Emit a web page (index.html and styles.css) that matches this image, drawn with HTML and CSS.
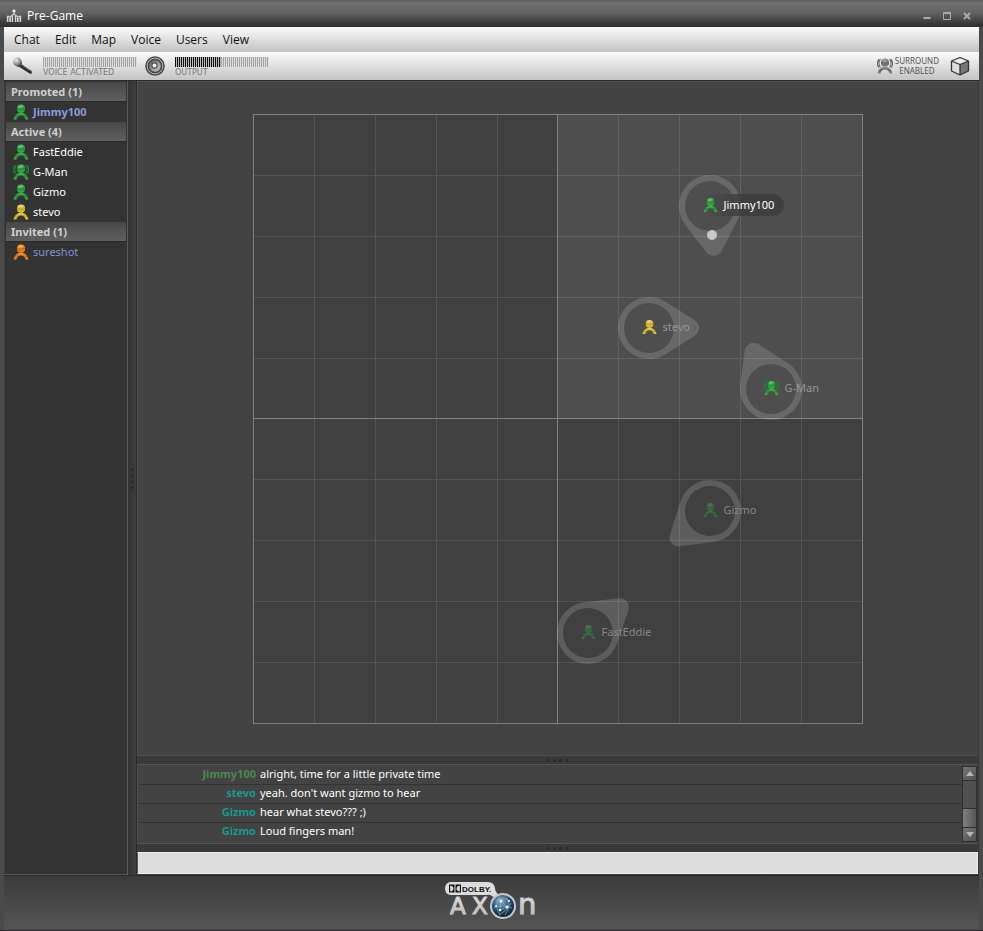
FILE: index.html
```html
<!DOCTYPE html>
<html lang="en">
<head>
<meta charset="utf-8">
<title>Pre-Game</title>
<link rel="stylesheet" href="styles.css">
</head>
<body>
<svg class="defs" width="0" height="0" aria-hidden="true">
  <defs>
    <linearGradient id="g-green" x1="0" y1="0" x2="0" y2="1"><stop offset="0" stop-color="#4cc455"/><stop offset=".5" stop-color="#1d8e30"/><stop offset="1" stop-color="#3fba4f"/></linearGradient>
    <linearGradient id="g-yellow" x1="0" y1="0" x2="0" y2="1"><stop offset="0" stop-color="#f2dc70"/><stop offset=".5" stop-color="#c9a41e"/><stop offset="1" stop-color="#e6cc3e"/></linearGradient>
    <linearGradient id="g-orange" x1="0" y1="0" x2="0" y2="1"><stop offset="0" stop-color="#ffa83c"/><stop offset=".5" stop-color="#d96a08"/><stop offset="1" stop-color="#f98f16"/></linearGradient>
    <linearGradient id="g-gray" x1="0" y1="0" x2="0" y2="1"><stop offset="0" stop-color="#999"/><stop offset=".5" stop-color="#666"/><stop offset="1" stop-color="#888"/></linearGradient>
    <linearGradient id="g-silver" x1="0" y1="0" x2="0" y2="1"><stop offset="0" stop-color="#f4f4f4"/><stop offset="1" stop-color="#a4a4a4"/></linearGradient>
    <linearGradient id="g-ring" x1="0" y1="0" x2="1" y2="1"><stop offset="0" stop-color="#555"/><stop offset="1" stop-color="#d8d8d8"/></linearGradient>
    <radialGradient id="g-globe" cx=".4" cy=".3" r=".7"><stop offset="0" stop-color="#8fb4cc"/><stop offset=".5" stop-color="#2c5878"/><stop offset="1" stop-color="#0a1c30"/></radialGradient>
    <radialGradient id="g-ball" cx=".35" cy=".3" r=".8"><stop offset="0" stop-color="#eee"/><stop offset="1" stop-color="#4c4c4c"/></radialGradient>
    <symbol id="user" viewBox="0 0 16 16">
      <path d="M.6 15.500C2 6.500 14 6.500 15.400 15.500L12.600 15.500C11.500 10 4.500 10 3.400 15.500Z"/>
      <circle cx="8" cy="4.700" r="4.100"/>
      <ellipse cx="7.400" cy="3.200" rx="2.200" ry="1.400" fill="#fff" opacity=".25"/>
    </symbol>
    <symbol id="user-talk" viewBox="0 0 16 16">
      <path d="M3.400 .8C1.400 3 1.400 7 3.400 9.400M1.800 1.400C0 4 0 7 1.800 9.600M12.600 .8C14.600 3 14.600 7 12.600 9.400M14.200 1.400C16 4 16 7 14.200 9.600" fill="none" stroke="currentColor" stroke-width="1.100"/>
      <path d="M.6 15.500C2 6.500 14 6.500 15.400 15.500L12.600 15.500C11.500 10 4.500 10 3.400 15.500Z"/>
      <circle cx="8" cy="4.700" r="4.100"/>
      <ellipse cx="7.400" cy="3.200" rx="2.200" ry="1.400" fill="#fff" opacity=".25"/>
    </symbol>
    <symbol id="pin" viewBox="-56 -56 112 112">
      <path fill-rule="evenodd" d="M16.200 -26.400L45.700 -7.700A9 9 0 0 1 45.700 7.700L16.200 26.400A31 31 0 1 1 16.200 -26.400ZM25 0A25 25 0 1 0 -25 0A25 25 0 1 0 25 0Z"/>
    </symbol>
  </defs>
</svg>

<div class="window">
  <header class="titlebar">
    <svg class="app-icon" viewBox="0 0 16 16" aria-hidden="true"><path d="M1.500 14V8M4.500 14V9.500M11.500 14V9.500M14.500 14V8M6.500 14V8M9.500 14V8M4 9L8 6L12 9M1 8.500H3.500M12.500 8.500H15M8 4V7" fill="none" stroke="#d4d4d4" stroke-width="1.300"/><circle cx="8" cy="3" r="1.600" fill="#eee"/><path d="M2.500 9H4V14H2.500ZM12 9H13.500V14H12Z" fill="#a5a5a5"/></svg>
    <h1>Pre-Game</h1>
    <div class="window-controls">
      <button aria-label="Minimize"><svg viewBox="0 0 8 8"><path d="M.5 6H7.500" stroke="#aaa" stroke-width="2"/></svg></button>
      <button aria-label="Maximize"><svg viewBox="0 0 8 8"><path d="M.5 .5H7.500V7.500H.5ZM.5 1.500H7.500" fill="none" stroke="#aaa"/></svg></button>
      <button aria-label="Close"><svg viewBox="0 0 8 8"><path d="M1 1L7 7M7 1L1 7" stroke="#aaa" stroke-width="2"/></svg></button>
    </div>
  </header>

  <nav class="menubar" aria-label="Main menu">
    <button>Chat</button><button>Edit</button><button>Map</button><button>Voice</button><button>Users</button><button>View</button>
  </nav>

  <div class="toolbar">
    <button class="tool" aria-label="Microphone"><svg viewBox="0 0 22 22"><path d="M8 8L19.500 16Q20.500 18.500 18.500 19L6.500 11.500Z" fill="#303030"/><path d="M9 9L17 14.800" stroke="#888"/><circle cx="5.500" cy="7" r="4.400" fill="url(#g-ball)"/><path d="M5.500 11.800L9.800 7.500" stroke="#555" stroke-width="1.500"/></svg></button>
    <div class="level">
      <div class="meter" role="img" aria-label="Voice level"></div>
      <span>VOICE ACTIVATED</span>
    </div>
    <button class="tool speaker" aria-label="Speaker"><svg viewBox="0 0 22 22"><circle cx="11" cy="11" r="9" fill="#d2d2d2" stroke="#4b4b4b" stroke-width="1.600"/><circle cx="11" cy="11" r="6.600" fill="url(#g-ring)" stroke="#4a4a4a" stroke-width="1.800"/><circle cx="10.500" cy="10.500" r="2.600" fill="#eee" stroke="#555" stroke-width="1.200"/></svg></button>
    <div class="level">
      <div class="meter" role="img" aria-label="Output level"><div class="meter-fill" style="width:49%"></div></div>
      <span>OUTPUT</span>
    </div>
    <button class="surround">
      <svg viewBox="0 0 16 16" fill="url(#g-gray)" color="#666"><use href="#user-talk"/></svg>
      <span>SURROUND<br>ENABLED</span>
    </button>
    <button class="tool cube" aria-label="Room"><svg viewBox="0 0 22 22"><path d="M2.500 6L11 2.500L19.500 6L11 9.500Z" fill="#eee"/><path d="M2.500 6L11 9.500V20L2.500 16Z" fill="#ddd"/><path d="M11 9.500L19.500 6V16L11 20Z" fill="#777"/><path d="M2.500 6L11 2.500L19.500 6V16L11 20L2.500 16ZM2.500 6L11 9.500L19.500 6M11 9.500V20" fill="none" stroke="#333" stroke-width="1.300" stroke-linejoin="round"/></svg></button>
  </div>

  <div class="main">
    <aside class="users">
      <h2>Promoted (1)</h2>
      <ul>
        <li class="promoted"><svg class="green"><use href="#user"/></svg>Jimmy100</li>
      </ul>
      <h2>Active (4)</h2>
      <ul>
        <li><svg class="green"><use href="#user"/></svg>FastEddie</li>
        <li><svg class="green"><use href="#user-talk"/></svg>G-Man</li>
        <li><svg class="green"><use href="#user"/></svg>Gizmo</li>
        <li><svg class="yellow"><use href="#user"/></svg>stevo</li>
      </ul>
      <h2>Invited (1)</h2>
      <ul>
        <li class="invited"><svg class="orange"><use href="#user"/></svg>sureshot</li>
      </ul>
    </aside>
    <div class="splitter vertical"><i></i><i></i><i></i><i></i></div>

    <div class="content">
      <section class="canvas" aria-label="Map">
        <div class="map">
          <svg class="grid" viewBox="0 0 610 610" shape-rendering="crispEdges" aria-hidden="true">
            <rect width="610" height="610" fill="#404040"/>
            <rect x="305" width="305" height="304" fill="#4e4e4e"/>
            <path d="M61.500 0V610M122.500 0V610M183.500 0V610M244.500 0V610M365.500 0V610M426.500 0V610M487.500 0V610M548.500 0V610M0 61.500H610M0 122.500H610M0 183.500H610M0 244.500H610M0 365.500H610M0 426.500H610M0 487.500H610M0 548.500H610" stroke="#fff" opacity=".1"/>
            <path d="M.5 .5H609.500V609.500H.5ZM304.500 0V610M0 304.500H610" fill="none" stroke="#828282"/>
          </svg>
          <div class="marker jimmy">
            <svg class="pin"><use href="#pin"/></svg><i class="dot"></i>
            <div class="tag"><svg class="green"><use href="#user"/></svg><span>Jimmy100</span></div>
          </div>
          <div class="marker stevo">
            <svg class="pin"><use href="#pin"/></svg>
            <div class="tag"><svg class="yellow"><use href="#user"/></svg><span>stevo</span></div>
          </div>
          <div class="marker gman">
            <svg class="pin"><use href="#pin"/></svg>
            <div class="tag"><svg class="green"><use href="#user-talk"/></svg><span>G-Man</span></div>
          </div>
          <div class="marker far gizmo">
            <svg class="pin"><use href="#pin"/></svg>
            <div class="tag"><svg class="green"><use href="#user"/></svg><span>Gizmo</span></div>
          </div>
          <div class="marker far eddie">
            <svg class="pin"><use href="#pin"/></svg>
            <div class="tag"><svg class="green"><use href="#user"/></svg><span>FastEddie</span></div>
          </div>
        </div>
      </section>
      <div class="splitter"><i></i><i></i><i></i><i></i></div>
      <section class="chat" aria-label="Chat">
        <div class="messages">
          <p><b class="me">Jimmy100</b><span>alright, time for a little private time</span></p>
          <p><b>stevo</b><span>yeah. don't want gizmo to hear</span></p>
          <p><b>Gizmo</b><span>hear what stevo??? ;)</span></p>
          <p><b>Gizmo</b><span>Loud fingers man!</span></p>
        </div>
        <div class="scrollbar">
          <button aria-label="Scroll up"><svg viewBox="0 0 8 5"><path d="M0 5L4 0L8 5Z" fill="#b5b5b5"/></svg></button>
          <div class="track"><div class="thumb"></div></div>
          <button aria-label="Scroll down"><svg viewBox="0 0 8 5"><path d="M0 0L4 5L8 0Z" fill="#b5b5b5"/></svg></button>
        </div>
      </section>
      <div class="splitter"><i></i><i></i><i></i><i></i></div>
      <input class="entry" type="text" aria-label="Message">
    </div>
  </div>

  <footer>
    <svg class="logo" viewBox="0 0 96 42" role="img" aria-label="Dolby Axon">
      <path d="M7 1H44Q50 1 51 7Q51 11 55 14L51 18Q47 13 43 14H7Q1 13.500 1 7.500Q1 1.500 7 1Z" fill="#dcdcdc"/>
      <path d="M5 3.500H10.500V11.500H5ZM11.500 3.500H17V11.500H11.500Z" fill="#111"/>
      <path d="M6.200 4.500Q9.500 5 9.500 7.500T6.200 10.500ZM15.800 4.500Q12.500 5 12.500 7.500T15.800 10.500Z" fill="#dcdcdc"/>
      <text x="18" y="11" class="logo-small">DOLBY.</text>
      <text x="6" y="33" class="logo-big">A</text>
      <text x="28" y="33" class="logo-big">X</text>
      <text x="74" y="33" class="logo-n">n</text>
      <circle cx="59" cy="25" r="12" fill="url(#g-globe)" stroke="#c8c8c8" stroke-width="2"/>
      <path d="M52 20Q58 15 65 20M50 27Q58 23 68 27M55 34Q63 30 67 22M55 16Q50 25 56 34M62 16Q68 25 61 34M57 20L63 26L56 29Z" fill="none" stroke="#8fb8cf" stroke-width=".6"/>
      <g fill="#e9f6ff"><circle cx="57" cy="20" r="1.500"/><circle cx="63" cy="26" r="1.500"/><circle cx="56" cy="29" r="1.300"/><circle cx="65" cy="20" r="1"/><circle cx="52" cy="25" r="1"/></g>
    </svg>
  </footer>
</div>
</body>
</html>
```

FILE: styles.css
```css
* { box-sizing: border-box; }
body { margin: 0; font-family: "Noto Sans", sans-serif; font-size: 11px; color: #fff; background: #444; }
button { margin: 0; padding: 0; border: 0; background: none; color: inherit; font: inherit; }
svg { display: block; }
h1, h2, ul, p { margin: 0; padding: 0; font-weight: normal; }
ul { list-style: none; }
.defs { position: absolute; }
.green { fill: url(#g-green); color: #1f7f34; }
.yellow { fill: url(#g-yellow); }
.orange { fill: url(#g-orange); }

.window { min-height: 100vh; display: flex; flex-direction: column; padding: 0 4px 1px; background: #4a4a4a; border-bottom: 1px solid #2c2a2c; }

.titlebar { height: 27px; margin: 0 -4px; padding: 4px 12px 0 6px; display: flex; align-items: center; gap: 5px; background: linear-gradient(#5a5a5a 0, #737373 3px, #606060 50%, #373737 90%, #303030); }
.titlebar h1 { flex: 1; font-family: "Open Sans", sans-serif; font-size: 12px; line-height: 20px; }
.app-icon { width: 16px; height: 16px; }
.window-controls { display: flex; gap: 12px; }
.window-controls svg { width: 8px; height: 8px; }

.menubar { height: 25px; padding-left: 10px; display: flex; align-items: center; gap: 15px; color: #111; font-family: "Open Sans", sans-serif; font-size: 12px; background: linear-gradient(#fcfcfc, #c2c2c2); }

.toolbar { height: 28px; padding: 0 8px; display: flex; align-items: center; background: linear-gradient(#fbfbfb, #c4c4c4); color: #777; }
.tool svg { width: 22px; height: 22px; }
.level { align-self: flex-start; width: 94px; margin: 5px 0 0 9px; font-family: "DejaVu Sans", sans-serif; font-size: 8px; line-height: 12px; }
.level span { display: block; }
.speaker { margin-left: 7px; }
.meter { height: 10px; background: repeating-linear-gradient(90deg, #a2a2a2 0 1px, #dedede 1px 2px); }
.meter-fill { height: 100%; background: repeating-linear-gradient(90deg, #111 0 1px, #bbb 1px 2px); }
.surround { margin-left: auto; display: flex; align-items: center; gap: 2px; color: #555; font-size: 8px; line-height: 10px; text-align: center; }
.surround svg { width: 16px; height: 18px; }
.cube { margin-left: 10px; }

.main { flex: 1; display: flex; background: #3a3a3a; border-top: 1px solid #2b2b2b; }
.users { width: 124px; padding: 1px 1px 0 2px; background: #333; border: 1px solid #5a5a5a; border-width: 0 1px 1px 0; box-shadow: inset 1px 0 #3e3e3e; }
.users h2 { height: 20px; padding-left: 5px; border-bottom: 1px solid #2b2b2b; font-size: 11px; line-height: 19px; font-weight: bold; color: #d0d0d0; background: linear-gradient(#474747, #606060); }
.users li { height: 20px; padding-left: 7px; display: flex; align-items: center; gap: 4px; line-height: 18px; }
.users svg { width: 16px; height: 16px; }
.users .promoted { font-weight: bold; color: #8b9bdd; }
.users .invited { color: #8394d2; }

.splitter { flex: none; height: 8px; display: flex; justify-content: center; align-items: center; gap: 3px; background: #3a3a3a; }
.splitter i { width: 3px; height: 3px; border-radius: 50%; background: #292929; }
.splitter.vertical { width: 9px; height: auto; flex-direction: column; border-right: 1px solid #2c2c2c; background: linear-gradient(90deg, #333, #3d3d3d); }

.content { flex: 1; min-width: 0; display: flex; flex-direction: column; padding: 0 1px 1px 0; }
.canvas { flex: 1; display: flex; align-items: center; justify-content: center; padding: 32px 32px 31px; background: #434343; border: 1px solid #505050; border-width: 1px 0 1px 1px; }
.map { position: relative; width: 100%; max-width: 610px; aspect-ratio: 1; }
.grid { width: 100%; height: 100%; }

.marker { position: absolute; width: 0; height: 0; color: #969696; }
.pin { position: absolute; left: -57px; top: -56px; width: 112px; height: 112px; fill: #fff; opacity: .15; }
.tag { position: absolute; left: -8px; top: -12px; height: 22px; display: flex; align-items: center; gap: 6px; white-space: nowrap; }
.tag svg { width: 15px; height: 16px; }
.far { color: #868686; }
.far .tag svg { opacity: .4; }
.jimmy { left: 75%; top: 15%; color: #fff; }
.jimmy .pin { transform: rotate(85deg); }
.jimmy .tag { padding-right: 10px; border-radius: 11px; background: linear-gradient(90deg, transparent, #3f3f3f 40px); }
.dot { position: absolute; left: -4px; top: 24px; width: 10px; height: 10px; border-radius: 50%; background: #c8c8c8; }
.stevo { left: 65%; top: 35%; }
.gman { left: 85%; top: 45%; }
.gman .pin { transform: rotate(245deg); }
.gizmo { left: 75%; top: 65%; }
.gizmo .pin { transform: rotate(140deg); }
.eddie { left: 55%; top: 85%; }
.eddie .pin { transform: rotate(-39deg); }

.chat { display: flex; padding: 1px 0 1px 1px; background: #434343; border: 1px solid #555; border-color: #555 #3a3a3a #555 #505050; }
.messages { flex: 1; }
.messages p { display: flex; gap: 4px; height: 19px; line-height: 15px; border-bottom: 1px solid #333; }
.messages p:last-child { border-bottom-color: transparent; }
.messages b { width: 117px; text-align: right; color: #149a93; }
.messages .me { color: #4c894c; }
.scrollbar { width: 15px; display: flex; flex-direction: column; border: 1px solid #303030; }
.scrollbar button { height: 13px; display: flex; align-items: center; justify-content: center; background: linear-gradient(135deg, #777, #505050); }
.scrollbar button svg { width: 8px; height: 5px; }
.track { flex: 1; display: flex; align-items: flex-end; background: #505050; border: 1px solid #303030; border-width: 1px 0; }
.thumb { width: 100%; height: 19px; background: linear-gradient(90deg, #808080, #565656); border-top: 1px solid #303030; }
.entry { width: 100%; height: 22px; padding: 0 4px; border: 1px solid #eee; border-left-color: #555; background: #ddd; color: #222; font: inherit; }

footer { flex: none; height: 54px; padding-top: 5px; display: flex; justify-content: center; background: linear-gradient(#3b3b3b, #555); border-top: 1px solid #292929; }
.logo { width: 96px; height: 42px; }
.logo-small { font: bold 8px "Liberation Sans", sans-serif; fill: #111; }
.logo-big { font: 23px "DejaVu Sans", sans-serif; fill: url(#g-silver); stroke: #ccc; }
.logo-n { font: 29px "DejaVu Sans", sans-serif; fill: url(#g-silver); stroke: #ccc; }
```
